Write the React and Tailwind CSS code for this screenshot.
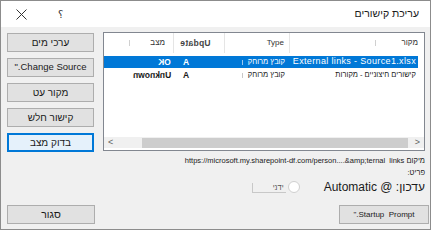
import React from 'react';

const font = { fontFamily: '"Liberation Sans", "DejaVu Sans", sans-serif' };

function SideButton({ children, focused }) {
  return (
    <div
      className={
        'flex h-[19px] w-[87px] items-center justify-center text-[10px] text-[#1a1a1a] ' +
        (focused ? 'border-2 border-[#0078d7] bg-[#e5f1fb]' : 'border border-[#adadad] bg-[#e1e1e1]')
      }
    >
      {children}
    </div>
  );
}

export default function App() {
  return (
    <div className="h-[232px] w-[432px] bg-white" style={font}>
      <div className="flex h-[230px] w-[431px] flex-col border border-[#8c8c8c]">
        {/* title bar */}
        <div className="flex h-[26px] items-center bg-white">
          <svg width="11" height="11" viewBox="0 0 11 11" className="ml-[15px]">
            <path d="M0.5 0.5 L10.5 10.5 M10.5 0.5 L0.5 10.5" stroke="#333" strokeWidth="1" />
          </svg>
          <span className="ml-[31px] text-[10px] text-[#333]">؟</span>
          <span dir="rtl" className="ml-auto mr-[11px] text-[10.5px] text-[#1a1a1a]">עריכת קישורים</span>
        </div>

        {/* body */}
        <div className="flex flex-1 flex-col bg-[#f0f0f0] pt-[5px]">
          <div className="flex">
            <div className="ml-[6px] mt-[1px] flex flex-col gap-[6px]">
              <SideButton>ערכי מים</SideButton>
              <SideButton><span className="text-[9.5px]">".Change Source</span></SideButton>
              <SideButton>מקור עט</SideButton>
              <SideButton>קישור חלש</SideButton>
              <SideButton focused>בדוק מצב</SideButton>
            </div>

            {/* list */}
            <div className="ml-[9px] flex h-[119px] w-[322px] flex-col border border-[#828790] bg-white">
              <div className="flex h-[20px] text-[8px] text-[#333]">
                <div className="flex w-[70px] items-center justify-end gap-[20px] border-r border-[#e5e5e5] pr-[8px]">
                  <span className="h-[6px] w-px bg-[#d0d0d0]" />
                  <span dir="rtl">מצב</span>
                </div>
                <div className="flex w-[51px] items-center border-r border-[#e5e5e5] pl-[6px]">
                  <span className="-scale-x-100 text-[8.5px] font-bold tracking-[0.3px] text-[#444]">Update</span>
                </div>
                <div className="flex w-[65px] items-center justify-end border-r border-[#e5e5e5] pr-[5px]">
                  <span>Type</span>
                </div>
                <div className="flex flex-1 items-center justify-end gap-[26px] pr-[6px]">
                  <span className="h-[6px] w-px bg-[#d0d0d0]" />
                  <span dir="rtl">מקור</span>
                </div>
              </div>

              <div className="mt-[3px] flex h-[12px] w-[314px] items-center bg-[#0078d7] text-white">
                <div className="flex w-[70px] justify-end pr-[3px]">
                  <span className="-scale-x-100 text-[8.5px] font-bold">OK</span>
                </div>
                <div className="w-[51px] pl-[9px] text-[8.5px] font-bold">A</div>
                <div className="flex w-[65px] items-center justify-end gap-[5px] pr-[5px] text-[7.5px]">
                  <span className="h-[5px] w-px bg-[#9cc7ee]" />
                  <span dir="rtl">קובץ מרוחק</span>
                </div>
                <div className="flex flex-1 justify-end overflow-hidden whitespace-nowrap pr-[2px] text-[9px] tracking-[0.35px]">
                  External links - Source1.xlsx
                </div>
              </div>

              <div className="flex h-[14px] w-[314px] items-center text-[#1a1a1a]">
                <div className="flex w-[70px] justify-end pr-[3px]">
                  <span className="-scale-x-100 text-[8.5px] font-bold">Unknown</span>
                </div>
                <div className="w-[51px] pl-[9px] text-[8.5px] font-bold">A</div>
                <div className="flex w-[65px] items-center justify-end gap-[5px] pr-[5px] text-[7.5px]">
                  <span className="h-[5px] w-px bg-[#c8c8c8]" />
                  <span dir="rtl">קובץ מרוחק</span>
                </div>
                <div dir="rtl" className="flex-1 whitespace-nowrap pr-[2px] text-[7.5px]">
                  קישורים חיצוניים - מקורות
                </div>
              </div>

              {/* horizontal scrollbar */}
              <div className="mb-[2px] mt-auto flex h-[11px] items-center bg-[#f0f0f0]">
                <span className="w-[38px] pl-[4px] text-[9px] leading-none text-[#606060]">&lt;</span>
                <div className="h-[10px] flex-1 bg-[#cdcdcd]" />
                <span className="w-[16px] pr-[4px] text-right text-[9px] leading-none text-[#606060]">&gt;</span>
              </div>
            </div>
          </div>

          {/* location + item */}
          <div dir="rtl" className="mr-[5px] mt-[3px] h-[11px] text-[7.5px] leading-[11px] text-[#1a1a1a]">
            מיקום <span dir="ltr">https://microsoft.my.sharepoint-df.com/person....&amp;amp;ternal&nbsp; links</span>
          </div>
          <div dir="rtl" className="mr-[5px] mt-[2px] h-[10px] text-[7.5px] leading-[10px] text-[#1a1a1a]">
            פריט:
          </div>

          {/* update mode */}
          <div className="mt-[1px] flex h-[16px] items-center justify-end pr-[5px]">
            <div className="mt-[2px] flex h-[10px] w-[34px] items-start justify-end border-b border-l border-[#c8c8c8] pr-[2px]">
              <span dir="rtl" className="text-[7.5px] leading-[9px] text-[#555]">ידני</span>
            </div>
            <span className="ml-[2px] h-[12px] w-[12px] rounded-full border border-[#d0d0d0] bg-white" />
            <span dir="rtl" className="ml-[24px] text-[12px] text-[#1a1a1a]">עדכון: @ Automatic</span>
          </div>

          {/* bottom buttons */}
          <div className="mt-auto mb-[5px] flex items-center justify-between pl-[6px] pr-[1px]">
            <div className="flex h-[19px] w-[88px] items-center justify-center border border-[#adadad] bg-[#e1e1e1] text-[10.5px] text-[#1a1a1a]">
              סגור
            </div>
            <div className="flex h-[19px] w-[90px] items-center justify-center border border-[#adadad] bg-[#e1e1e1] text-[8px] text-[#1a1a1a]">
              ".Startup&nbsp; Prompt
            </div>
          </div>
        </div>
      </div>
    </div>
  );
}
